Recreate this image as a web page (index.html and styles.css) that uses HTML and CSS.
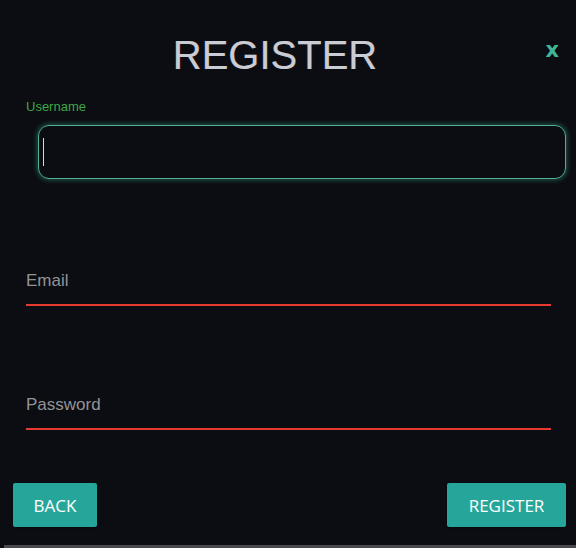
FILE: index.html
```html
<!DOCTYPE html>
<html lang="en">
<head>
<meta charset="utf-8">
<title>Register</title>
<link rel="stylesheet" href="styles.css">
</head>
<body>
<div class="modal">
  <div class="header">
    <h1 class="title">REGISTER</h1>
    <span class="close">x</span>
  </div>
  <div class="label-username">Username</div>
  <div class="input-focused"><span class="caret"></span></div>
  <div class="line-field email"><span class="placeholder">Email</span></div>
  <div class="line-field password"><span class="placeholder">Password</span></div>
  <div class="actions">
    <button class="btn btn-back">BACK</button>
    <button class="btn btn-register">REGISTER</button>
  </div>
</div>
<div class="scrollbar"></div>
</body>
</html>
```

FILE: styles.css
```css
html, body {
  margin: 0;
  padding: 0;
  background: #0b0d12;
  height: 548px;
  overflow: hidden;
}
body {
  font-family: "Liberation Sans", Arial, sans-serif;
  position: relative;
}
.modal {
  padding: 32px 10px 0 0;
}
.header {
  display: flex;
  align-items: flex-start;
  position: relative;
}
.title {
  margin: 0;
  flex: 1;
  text-align: center;
  font-weight: normal;
  font-size: 40px;
  line-height: 46px;
  color: #c9ccd2;
  padding-right: 16px;
  text-shadow: -0.5px 0 0 rgba(90,140,200,0.35), 0.5px 0 0 rgba(200,90,60,0.35);
}
.close {
  position: absolute;
  right: 7px;
  top: 6px;
  color: #3fb59a;
  font-family: "DejaVu Sans", sans-serif;
  font-weight: bold;
  font-size: 21px;
  line-height: 24px;
}
.label-username {
  margin: 21px 0 0 26px;
  font-size: 13px;
  line-height: 15px;
  color: #3fa844;
}
.input-focused {
  margin: 11px 0 0 38px;
  height: 54px;
  box-sizing: border-box;
  border: 1px solid #4fae9c;
  border-radius: 11px;
  box-shadow: 0 0 5px 1px rgba(64, 180, 150, 0.45);
  display: flex;
  align-items: center;
  padding-left: 4px;
}
.caret {
  display: block;
  width: 1px;
  height: 28px;
  background: #d8d8d8;
}
.line-field {
  margin-left: 26px;
  margin-right: 15px;
  border-bottom: 2px solid #e63a30;
  padding-bottom: 14px;
  font-size: 17px;
  line-height: 19px;
}
.email {
  margin-top: 92px;
}
.password {
  margin-top: 89px;
}
.placeholder {
  color: #939396;
}
.actions {
  display: flex;
  justify-content: space-between;
  margin: 53px 0 0 13px;
}
.btn {
  height: 44px;
  border: none;
  border-radius: 2px;
  background: #26a69a;
  color: #ffffff;
  font-family: "Open Sans", "Noto Sans", sans-serif;
  font-size: 17px;
  padding: 0 20px;
  box-shadow: 0 1px 2px rgba(0,0,0,0.3);
}
.btn-back {
  width: 84px;
}
.btn-register {
  width: 119px;
}
.scrollbar {
  position: absolute;
  left: 4px;
  right: 0;
  bottom: 0;
  height: 3px;
  background: #4a4a4c;
}
```
